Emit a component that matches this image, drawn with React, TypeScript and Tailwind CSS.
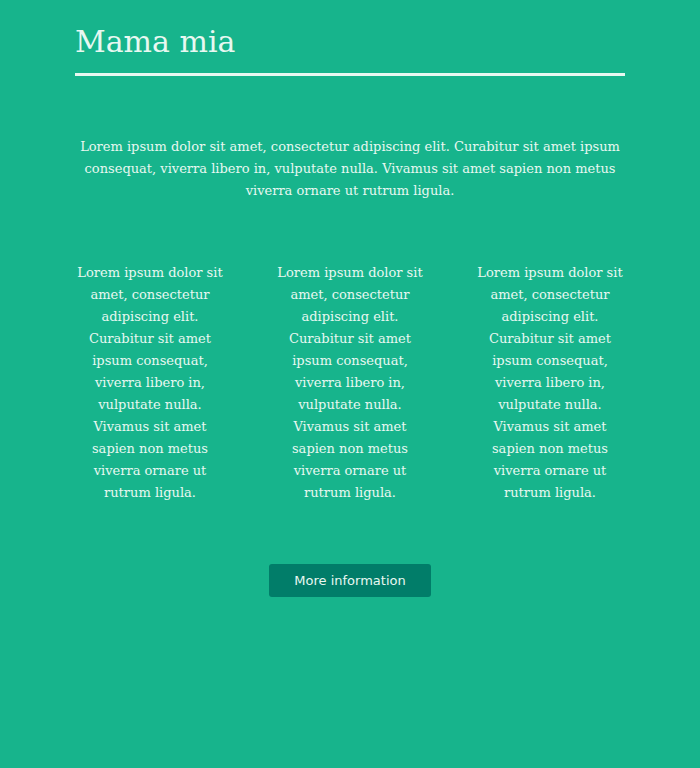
import React from 'react';

const lorem =
  'Lorem ipsum dolor sit amet, consectetur adipiscing elit. Curabitur sit amet ipsum consequat, viverra libero in, vulputate nulla. Vivamus sit amet sapien non metus viverra ornare ut rutrum ligula.';

const App: React.FC = () => {
  return (
    <div className="min-h-screen bg-[#17b48c] text-[#e8f8f1] font-['DejaVu_Serif',serif]">
      <div className="mx-auto w-[550px] pt-[24px]">
        <h1 className="text-[30px] leading-[35px] pb-[14px] border-b-[3px] border-[#e8f8f1]">
          Mama mia
        </h1>

        <p className="mt-[60px] text-[13px] leading-[22px] text-center">{lorem}</p>

        <div className="mt-[60px] grid grid-cols-3 gap-[50px]">
          {[0, 1, 2].map((i) => (
            <p key={i} className="text-[13px] leading-[22px] text-center">
              {lorem}
            </p>
          ))}
        </div>

        <div className="mt-[60px] flex justify-center">
          <button className="w-[162px] h-[33px] rounded-[3px] bg-[#017d69] text-[13px] text-[#e8f8f1] font-['DejaVu_Sans',sans-serif]">
            More information
          </button>
        </div>
      </div>
    </div>
  );
};

export default App;
